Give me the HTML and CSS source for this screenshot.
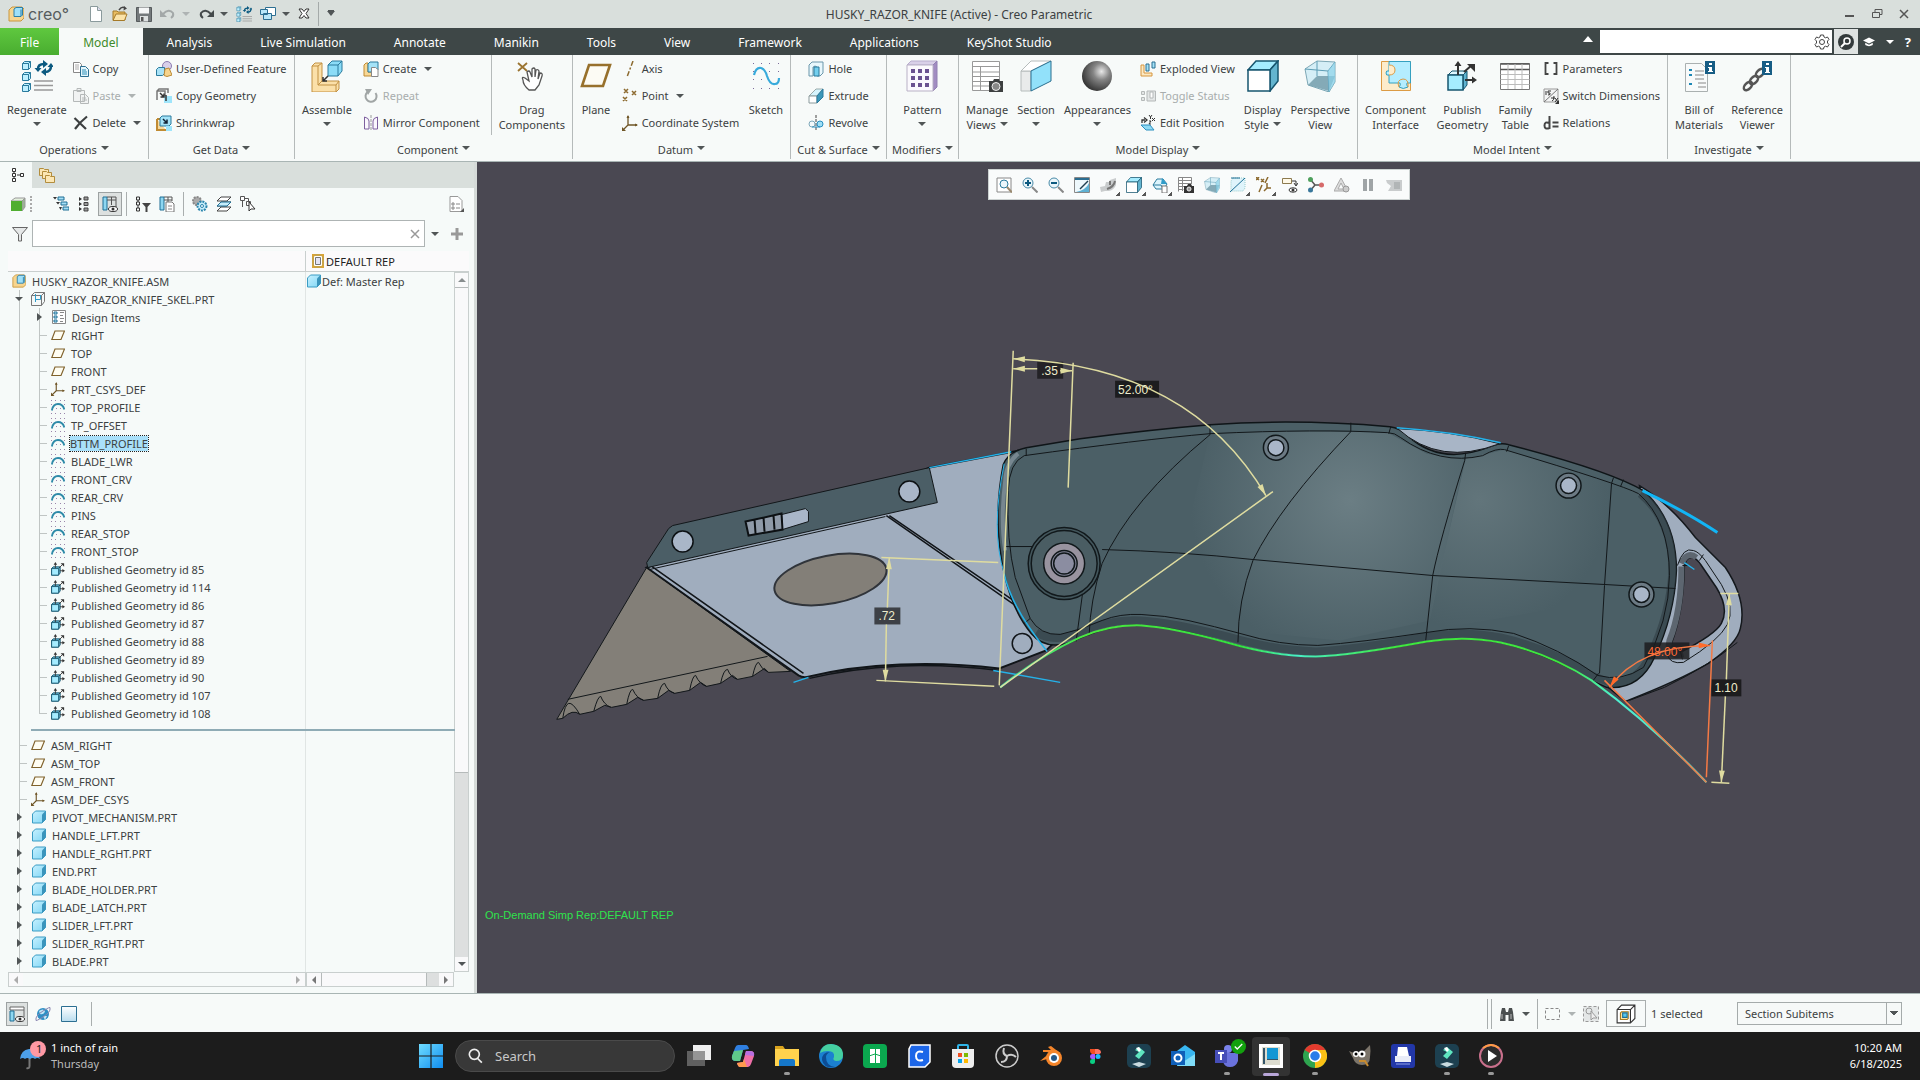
FILE: index.html
```html
<!DOCTYPE html>
<html lang="en">
<head>
    <meta charset="UTF-8">
    <meta name="viewport" content="width=device-width, initial-scale=1.0">
    <link rel="stylesheet" href="styles.css">
    <title>HUSKY_RAZOR_KNIFE (Active) - Creo Parametric</title>
</head>
<body>
    <!-- icon set -->
    <svg class="defs" width="0" height="0" aria-hidden="true">
        <defs>
            <linearGradient id="gCyan" x1="0" y1="0" x2="1" y2="1"><stop offset="0" stop-color="#c8f1ff"/><stop offset="1" stop-color="#7fd6f5"/></linearGradient>
            <radialGradient id="gBall" cx=".65" cy=".35" r=".7"><stop offset="0" stop-color="#e8e8e8"/><stop offset=".4" stop-color="#858585"/><stop offset="1" stop-color="#333"/></radialGradient>
            <linearGradient id="gWin" x1="0" y1="0" x2="1" y2="1"><stop offset="0" stop-color="#6fdcff"/><stop offset="1" stop-color="#0f8df0"/></linearGradient>
            <linearGradient id="gFade" x1="0" y1="0" x2="0" y2="1"><stop offset="0" stop-color="#fff"/><stop offset="1" stop-color="#b9dcee"/></linearGradient>
        </defs>
        <symbol id="logo" viewBox="0 0 16 16"><path d="M1 4l3-3h10l2 2v9l-3 3H1z" fill="#f7d58f" stroke="#c9973e"/><path d="M6 3l2-1.500h6.500V9L13 10.500H6z" fill="#9fe0f8" stroke="#2c7fa8"/><path d="M13 3.500V10" stroke="#2c7fa8"/></symbol>
        <symbol id="new" viewBox="0 0 16 16"><path d="M2.500.5h7l4 4v11h-11z" fill="#fff" stroke="#8a9a9c"/><path d="M9.500.5v4h4" fill="#dde" stroke="#8a9a9c"/></symbol>
        <symbol id="open" viewBox="0 0 16 16"><path d="M1 14V5h4l1 1h7v8z" fill="#e9bd62" stroke="#a57a28"/><path d="M1 14.500L4 8h11l-2.500 6.500z" fill="#fbe3a8" stroke="#a57a28"/><path d="M7 4q3-4 6-2" fill="none" stroke="#444" stroke-width="1.500"/><path d="M12 0l3 2.500-3.500 2z" fill="#444"/></symbol>
        <symbol id="save" viewBox="0 0 16 16"><path d="M.5 1.500h15v14h-15z" fill="#74797b" stroke="#565b5d"/><path d="M3 1.500h10v6H3z" fill="#f4f6f6"/><path d="M4 10h8v5.500H4z" fill="#dde1e1"/><path d="M5 11h2.500v4H5z" fill="#555"/></symbol>
        <symbol id="undo" viewBox="0 0 16 16"><path d="M3 8q6-6 10-1 1 3-2 5" fill="none" stroke="#a3a8a8" stroke-width="2"/><path d="M0 4v7h7z" fill="#a3a8a8"/></symbol>
        <symbol id="redo" viewBox="0 0 16 16"><path d="M13 8Q7 2 3 7q-1 3 2 5" fill="none" stroke="#454a4b" stroke-width="2"/><path d="M16 4v7H9z" fill="#454a4b"/></symbol>
        <symbol id="regen" viewBox="0 0 32 32"><g fill="#bff0ff" stroke="#2a7b9d"><path d="M1.500 3.500l2-2h6v6l-2 2h-6zM1.500 14.500l2-2h6v6l-2 2h-6zM1.500 25.500l2-2h6v6l-2 2h-6z"/><path d="M1.500 3.500h6v6M7.500 3.500l2-2M1.500 14.500h6v6M7.500 14.500l2-2M1.500 25.500h6v6M7.500 25.500l2-2" fill="none"/></g><path d="M17 9q0-5 6-5M30 6q0 6-6 6" fill="none" stroke="#0c5a80" stroke-width="2.500"/><path d="M22 0l5 4-5 4zM25 8v8l-5-4zM26.500 7l3.500-4 3 4zM13.500 8L17 12l3.500-4z" fill="#0c5a80"/><path d="M13 21h19M13 25.500h19M13 30h19" stroke="#999" stroke-width="1.500"/></symbol>
        <symbol id="wins" viewBox="0 0 16 16"><path d="M5.500 1.500h10v8h-10z" fill="#fff" stroke="#2c6f92"/><path d="M.5 3.500h7v5h-7zM3.500 7.500h8v6h-8z" fill="#b9e8fa" stroke="#2c6f92"/></symbol>
        <symbol id="xbox" viewBox="0 0 12 12"><path d="M1 1h3l2 2.500L8 1h3L8 5.500 11 10H8L6 7.500 4 10H1l3-4.500z" fill="#fff" stroke="#333"/></symbol>
        <symbol id="copy" viewBox="0 0 16 16"><path d="M.5 1.500h6l2 2v8h-8z" fill="#fff" stroke="#888"/><path d="M2 4h4M2 6h4M2 8h4" stroke="#aaa"/><path d="M7.500 5.500h5l3 3v7h-8z" fill="#e5f6fc" stroke="#2c6f92"/><path d="M9 9h4M9 11h5M9 13h5" stroke="#2c8fb8"/></symbol>
        <symbol id="paste" viewBox="0 0 16 16"><g fill="#f1f3f3" stroke="#b4b8b8"><path d="M.5 2.500h11v11H.500zM4 .5h4v3H4zM7.500 6.500h5l3 3v6h-8z"/><path d="M9 10h4M9 12h5"/></g></symbol>
        <symbol id="delete" viewBox="0 0 16 16"><path d="M1.500 3L13 14M14 1.500Q7 7 2 14" fill="none" stroke="#3c3f40" stroke-width="2.200"/></symbol>
        <symbol id="udf" viewBox="0 0 16 16"><circle cx="11" cy="5" r="4.500" fill="#d8d0ea" stroke="#8b7bb0"/><path d="M.5 8.500l2-2h6v6l-2 2h-6z" fill="#a8e2f7" stroke="#2a7b9d"/><path d="M9 8l4-1 3 7-5 1.500-3-1z" fill="#f6d48d" stroke="#bb8a34"/></symbol>
        <symbol id="copygeom" viewBox="0 0 16 16"><path d="M1 12V3l2-2h9v4M1 3h8v5" fill="none" stroke="#777" stroke-width="1.500"/><path d="M8 8h8v7H8z" fill="#9fe5fb"/><path d="M4 5l4 4M8 5.500V9H4.500M10 7v6" stroke="#333" fill="none" stroke-width="1.500"/></symbol>
        <symbol id="shrink" viewBox="0 0 16 16"><path d="M1 4v11h9M1 4h3" fill="#f6d99c" stroke="#c08b33" stroke-width="2"/><path d="M4 3l2-2h9v8l-2 2H4z" fill="#a4e3f8" stroke="#2a7b9d"/><path d="M7 4l4 4M11 4.500V8H7.500" stroke="#123" fill="none" stroke-width="1.500"/><path d="M10 11h6v5h-6z" fill="#9fe5fb"/></symbol>
        <symbol id="assemble" viewBox="0 0 32 32"><path d="M1 6l3-3h7v18h17v8l-3 3H1z" fill="#fbe0a9" stroke="#c29142"/><path d="M1 6h6v19h18v7M7 6l4-3M7 25l4-4M25 25l3-4" fill="none" stroke="#c29142"/><path d="M17 5l4-4h10v10l-4 5H17z" fill="#8bdcf7" stroke="#2a7b9d"/><path d="M17 5h10v11M27 5l4-4" fill="none" stroke="#2a7b9d"/><path d="M17 16l-5 5M12 17v4h4" fill="none" stroke="#333" stroke-width="1.500"/></symbol>
        <symbol id="create" viewBox="0 0 16 16"><path d="M1 4l2-2h2v9h7v2l-2 2H1z" fill="#f8d896" stroke="#c08b33"/><path d="M5 3l2-2h8v8l-2 2H5z" fill="#a4e3f8" stroke="#2a7b9d"/><path d="M8.500 6.500h4l2.500 2v7H8.500z" fill="#fff" stroke="#888"/></symbol>
        <symbol id="repeat" viewBox="0 0 16 16"><path d="M4.500 4a5.500 5.500 0 1 0 8 1" fill="none" stroke="#a0a5a5" stroke-width="2"/><path d="M2 1h7L5 7z" fill="#a0a5a5"/></symbol>
        <symbol id="mirror" viewBox="0 0 16 16"><path d="M1.500 14V2Q6 3 6 6v8zM14.500 14V2Q10 3 10 6v8z" fill="#faf7fd" stroke="#7d5f9e"/><path d="M8 0v16" stroke="#999" stroke-dasharray="3 1"/></symbol>
        <symbol id="drag" viewBox="0 0 32 32"><path d="M2 3l9 8M11 3l-9 8" stroke="#9b7431" stroke-width="1.800"/><path d="M7 20q-2-4 2-2l4 3-2-9q2-2 3 0l2 5V9q2-2 3 0v8l1-7q2-1 3 1l-1 8 2-6q3 0 2 3l-3 9-4 5h-6q-6-5-6-10z" fill="#fff" stroke="#555" stroke-width="1.300"/></symbol>
        <symbol id="plane" viewBox="0 0 32 32"><path d="M9 5h21l-7 21H2z" fill="#fcfbf4" stroke="#97702c" stroke-width="2.600"/></symbol>
        <symbol id="axis" viewBox="0 0 16 16"><path d="M11 0L5 16" stroke="#8c6a2f" stroke-width="1.500" stroke-dasharray="5 2 2 2"/></symbol>
        <symbol id="point" viewBox="0 0 16 16"><path d="M2 1l4 4M6 1L2 5M10 3l4 4M14 3l-4 4M1 9l4 4M5 9l-4 4" stroke="#8c6a2f" stroke-width="1.500"/></symbol>
        <symbol id="csys" viewBox="0 0 16 16"><path d="M6 1v9h9M6 10l-5 5" fill="none" stroke="#6f5526" stroke-width="1.300"/><path d="M4.500 3L6 0l1.500 3zM13 8.500l3 1.500-3 1.500zM0 12v4h4z" fill="#6f5526"/></symbol>
        <symbol id="sketch" viewBox="0 0 32 32"><g fill="#7c6a9a"><path d="M3 3h1v1H3zM11 3h1v1h-1zM19 3h1v1h-1zM28 3h1v1h-1zM3 11h1v1H3zM19 11h1v1h-1zM28 11h1v1h-1zM3 19h1v1H3zM11 19h1v1h-1zM28 19h1v1h-1zM3 28h1v1H3zM11 28h1v1h-1zM19 28h1v1h-1zM28 28h1v1h-1z"/></g><path d="M4 15Q6 7 11 8q4 1 6 8 3 9 8 8 4 0 4-6" fill="none" stroke="#38aadb" stroke-width="2.200"/></symbol>
        <symbol id="hole" viewBox="0 0 16 16"><path d="M1 4l3-3h11v11l-3 3H9V6q-2-2-4 0v9H1z" fill="#e8f7fc" stroke="#6a97ab"/><path d="M6 6h5v9H6z" fill="#73cfee" stroke="#2a7b9d"/></symbol>
        <symbol id="extrude" viewBox="0 0 16 16"><path d="M1 8l7-7h7l-6 7z" fill="#d6f4fd" stroke="#9aa"/><path d="M1 8h8v7H1z" fill="#fff" stroke="#8a9a9c"/><path d="M9 8l6-7v8l-6 6z" fill="#3c98b9" stroke="#2a7b9d"/></symbol>
        <symbol id="revolve" viewBox="0 0 16 16"><path d="M8 0v16" stroke="#444" stroke-dasharray="3 1"/><circle cx="4" cy="9" r="3" fill="#f4f9fb" stroke="#7ea8ba"/><circle cx="12" cy="9" r="3" fill="#9fdff6" stroke="#2a8fc0"/><path d="M4 12h8" stroke="#2a8fc0"/></symbol>
        <symbol id="pattern" viewBox="0 0 32 32"><path d="M1 5l4-4h26l-4 4z" fill="#d9d0e8" stroke="#b9aece"/><path d="M27 5l4-4v26l-4 4z" fill="#a28cc2" stroke="#9280b3"/><path d="M1 5h26v26H1z" fill="#fbf9fd" stroke="#b9b1c6"/><g fill="#6b5290"><path d="M5 9h4v4H5zM12 9h4v4h-4zM19 9h4v4h-4zM5 16h4v4H5zM12 16h4v4h-4zM19 16h4v4h-4zM5 23h4v4H5zM12 23h4v4h-4zM19 23h4v4h-4z"/></g></symbol>
        <symbol id="views" viewBox="0 0 32 32"><path d="M1.500 1.500h27v29h-27z" fill="#fff"/><path d="M1.500 30.500V1.500h27V20M1.500 6.500h27M1.500 12h27M1.500 16.500h27M1.500 21.500h17M1.500 26h17M1.500 30.500h17M9.500 6v24" fill="none" stroke="#999"/><path d="M18 21h4l1-2h5l1 2h3v11H18z" fill="#3d3f40"/><circle cx="25" cy="26.500" r="4" fill="#888" stroke="#eee"/></symbol>
        <symbol id="tviews" viewBox="0 0 16 16"><path d="M.5.5h13v14H.5z" fill="#fff"/><path d="M.5 14.500V.5h13V7M.5 3.500h13M.5 6.500h13M.5 9.500h6M.5 12.500h5M4.500 1v13" fill="none" stroke="#888"/><path d="M6 9h3l1-2h3l1 2h2v7H6z" fill="#333"/><circle cx="11" cy="12" r="2" fill="#999" stroke="#eee"/></symbol>
        <symbol id="section" viewBox="0 0 32 32"><path d="M1 11h10v20H1z" fill="#e9ebeb" stroke="#b6bcbc"/><path d="M1 11l10-10h20L11 11z" fill="#fff" stroke="#b6bcbc"/><path d="M11 11L31 1v20L11 31z" fill="#92e1fa" stroke="#2a6f90"/></symbol>
        <symbol id="ball" viewBox="0 0 32 32"><circle cx="16" cy="16" r="15" fill="url(#gBall)"/></symbol>
        <symbol id="exploded" viewBox="0 0 16 16"><path d="M1 4h3v8h8v3H1z" fill="#fbe9c4" stroke="#d7963e"/><path d="M6 3h3v7H6zM12 1h3v6h-3z" fill="#a4e3f8" stroke="#2a6f90"/></symbol>
        <symbol id="toggle" viewBox="0 0 16 16"><path d="M1.500 3.500h3v3h-3zM1.500 9.500h3v3h-3zM7 3h8.500v10H7z" fill="#e3e6e6" stroke="#b4b8b8"/><path d="M10 4h3v6h-3z" fill="#fff" stroke="#b4b8b8"/></symbol>
        <symbol id="editpos" viewBox="0 0 16 16"><path d="M2 8V5h3M4 2.500L7 5 4 7.500" fill="none" stroke="#333" stroke-width="1.300"/><path d="M9 0l1.500 2L12 0M10.500 2v2M12 3l3 3M15 3l-3 3M9 6h2L9 9h2" fill="none" stroke="#333"/><path d="M1 10h9l4 5H6z" fill="#8fdaf4" stroke="#2a8fc0"/></symbol>
        <symbol id="cube" viewBox="0 0 32 32"><path d="M1 10l8-9h22l-8 9z" fill="#a5ecff" stroke="#17566f" stroke-width="1.500"/><path d="M23 10l8-9v20l-8 10z" fill="#63b4cf" stroke="#17566f" stroke-width="1.500"/><path d="M1 10h22v21H1z" fill="#fff" stroke="#17566f" stroke-width="1.500"/></symbol>
        <symbol id="persp" viewBox="0 0 32 32"><path d="M1 9L13 1l18 1v20l-6 10L4 25z" fill="#d5eef6" stroke="#7da7b5"/><path d="M4 25l9-9h18l-6 15z" fill="#6f98a8" opacity=".8"/><path d="M1 9l23 2 7-9M24 11l1 21M13 1v15" fill="none" stroke="#5c9cb4"/><path d="M24 11l7-9v20l-6 10z" fill="#8cd3ea" opacity=".7"/></symbol>
        <symbol id="puzzle" viewBox="0 0 32 32"><path d="M1.500 1.500h29v29h-29z" fill="#fdeccb" stroke="#dc9b44"/><path d="M9 1.500h21.500V23H27q-1 2 1 4-5 3-9 0 2-2 1-4H9v-8q-3 1-3-2t3-2z" fill="#b4edff" stroke="#35a0c0"/><path d="M9 5q6 0 6 5t-6 5" fill="#fdeccb" stroke="#dc9b44"/><path d="M19 27q-3-7 4-8 6 0 5 8" fill="none" stroke="#dc9b44"/></symbol>
        <symbol id="publish" viewBox="0 0 32 32"><path d="M2 15l4-4h15l-4 4z" fill="#dff7ff" stroke="#17566f"/><path d="M17 15l4-4v14l-4 5z" fill="#5fb3d0" stroke="#17566f"/><path d="M2 15h15v15H2z" fill="#a5ecff" stroke="#17566f" stroke-width="1.500"/><path d="M12 15V5M18 12l8-7M19 20h8" stroke="#333" stroke-width="2"/><path d="M8.500 6L12 1l3.500 5zM21 4h8v8zM26 16.500l5 3.500-5 3.500z" fill="#333"/></symbol>
        <symbol id="tpublish" viewBox="0 0 16 16"><path d="M.5 7.500l2-2h8v7l-2 2.500h-8z" fill="#5fb3d0" stroke="#17566f"/><path d="M.7 7.500h8v7.500h-8z" fill="#a5ecff" stroke="#17566f"/><path d="M5 7V2M9 7l4-4M10 10h4" stroke="#333"/><path d="M3 3l2-3 2 3zM11 1.500h4v4zM13 8l3 2-3 2z" fill="#333"/></symbol>
        <symbol id="ftable" viewBox="0 0 32 32"><path d="M1.500 3.500h29v26h-29z" fill="#fff" stroke="#777"/><path d="M1.500 4h29M1.500 9.500h29" stroke="#555" stroke-width="1.500"/><path d="M1.500 14.500h29M1.500 19.500h29M1.500 24.500h29M9 4v25M16 4v25M23 4v25" stroke="#bbb"/></symbol>
        <symbol id="params" viewBox="0 0 16 16"><path d="M5.500 2H2.500v11h3M10.500 2h3v11h-3" fill="none" stroke="#444" stroke-width="1.800"/></symbol>
        <symbol id="switch" viewBox="0 0 16 16"><path d="M1 1h14v13H1z" fill="#f3f4f4" stroke="#999"/><path d="M1 14L15 1" stroke="#777"/><path d="M3 3v4M5 3h3M5 3v2h2q1 2-2 2M9 13q2 0 2-5M8 10h4M12 10l3 4M15 10l-3 4" fill="none" stroke="#333"/><path d="M12 16h4v-4z" fill="#333"/></symbol>
        <symbol id="relations" viewBox="0 0 16 16"><path d="M6.500 1v13M6.500 8q-5-2-5 2.500t5 2.500M9.500 7.500h6M9.500 11.500h6" fill="none" stroke="#444" stroke-width="2"/></symbol>
        <symbol id="bom" viewBox="0 0 32 32"><path d="M2.500 3.500h16l6 6v22h-22z" fill="#f8fafa" stroke="#aab0b0"/><path d="M12 11h9M12 15h9M12 19h9M15 23h8M15 27h8" stroke="#888"/><path d="M6 10h3M6 15h3M6 24h3" stroke="#1d87b5" stroke-width="2"/><path d="M22 1h10v13H22z" fill="#175d85"/><path d="M26 3h3v2h-3zM25 7h4v4h1v1h-5v-1h1V8h-1z" fill="#fff"/></symbol>
        <symbol id="refview" viewBox="0 0 32 32"><g fill="none" stroke="#555" stroke-width="2.500"><ellipse cx="7" cy="26" rx="5" ry="3" transform="rotate(-45 7 26)"/><ellipse cx="13" cy="20" rx="5" ry="3" transform="rotate(-45 13 20)"/><ellipse cx="19" cy="13" rx="5" ry="3" transform="rotate(-45 19 13)"/></g><path d="M21 1h10v14H21z" fill="#175d85"/><path d="M25 3h3v2h-3zM24 7h4v5h1v1h-5v-1h1V8h-1z" fill="#fff"/></symbol>
        <symbol id="gear" viewBox="0 0 16 16"><path d="M6.500 1h3l.5 2 1.500.8 2-.8L15 5.500 13.500 7v2l1.500 1.500-1.500 2.500-2-.8L10 13l-.5 2h-3L6 13l-1.500-.8-2 .8L1 10.500 2.500 9V7L1 5.500 2.500 3l2 .8L6 3z" fill="none" stroke="#444"/><circle cx="8" cy="8" r="2.500" fill="none" stroke="#444"/></symbol>
        <symbol id="find" viewBox="0 0 16 16"><circle cx="8" cy="8" r="8" fill="#333a3b"/><circle cx="9" cy="7" r="3" fill="none" stroke="#fff" stroke-width="1.500"/><path d="M7 9l-4 4" stroke="#fff" stroke-width="2"/></symbol>
        <symbol id="hat" viewBox="0 0 16 16"><path d="M0 6l8-4 8 4-8 4zM3 9v3q5 3 10 0V9l-5 2.500z" fill="#fff"/></symbol>

        <!-- navigator -->
        <symbol id="tabtree" viewBox="0 0 16 16"><path d="M3 5v6M6 8h4" stroke="#333"/><path d="M1.500 1.500h3v3h-3zM1.500 6.500h3v3h-3zM1.500 11.500h3v3h-3zM9.500 6.500h3v3h-3z" fill="#fff" stroke="#333"/></symbol>
        <symbol id="folders" viewBox="0 0 16 16"><g fill="#fce7b4" stroke="#b28d3d"><path d="M.5 1.500h4l1 1h4v6h-9z"/><path d="M3.500 4.500h4l1 1h4v6h-9z"/><path d="M6.500 8.500h4l1 1h4v6h-9z"/></g></symbol>
        <symbol id="greencube" viewBox="0 0 16 16"><path d="M1 5l4-3h10l-3 3z" fill="#e4f1de" stroke="#999"/><path d="M12 5l3-3v9l-3 4z" fill="#9cb395" stroke="#999"/><path d="M1 5h11v10H1z" fill="#4fae30"/></symbol>
        <symbol id="treeexp" viewBox="0 0 16 16"><path d="M5 1h6v3H5zM8 6h6v3H8zM10 11h6v3h-6z" fill="#a5dff5" stroke="#1f6f95"/><path d="M0 1h4L2 3.500zM3 6h4L5 8.500zM6 11h3l-1.500 3z" fill="#333"/></symbol>
        <symbol id="treecol" viewBox="0 0 16 16"><path d="M7 1h4v3H7zM7 6.500h4v3H7zM7 12h4v3H7z" fill="#999" stroke="#444"/><path d="M2 1l3 2-3 2zM2 6l3 2-3 2zM2 11l3 2-3 2z" fill="#333"/></symbol>
        <symbol id="cols" viewBox="0 0 16 16"><path d="M1 1h4v13H1z" fill="#8ed7f1" stroke="#1f6f95"/><path d="M5 1h9v13M5 4h9M9.500 1v8" fill="none" stroke="#555"/><ellipse cx="11" cy="13" rx="4.500" ry="2.500" fill="#fff" stroke="#333"/><circle cx="11" cy="13" r="1.500" fill="#333"/></symbol>
        <symbol id="panel" viewBox="0 0 16 16"><path d="M1 1h14v3H1z" fill="#fff" stroke="#666"/><path d="M15 4v7M5 14.500H1" fill="none" stroke="#666"/><path d="M1 5h4v10H1z" fill="#8ed7f1" stroke="#1f6f95"/><ellipse cx="11" cy="13" rx="4.500" ry="2.500" fill="#fff" stroke="#333"/><circle cx="11" cy="13" r="1.500" fill="#333"/></symbol>
        <symbol id="treefilt" viewBox="0 0 16 16"><path d="M1.500 1h3v3h-3zM1.500 6h3v3h-3zM1.500 12h3v3h-3zM3 4v2M3 9v3" fill="none" stroke="#333"/><path d="M7 7h9l-3.500 4v5h-2v-5z" fill="#444"/></symbol>
        <symbol id="colset" viewBox="0 0 16 16"><path d="M1 1h4v13H1z" fill="#8ed7f1" stroke="#1f6f95"/><path d="M5 1h8M5 4h8M9 1v5M13 1v4" stroke="#555"/><path d="M7 6h6l2 2v8H7z" fill="#fff" stroke="#777"/><path d="M9 10h4M9 13h4" stroke="#888"/></symbol>
        <symbol id="gears" viewBox="0 0 16 16"><circle cx="5" cy="5" r="4" fill="#aaa" stroke="#888" stroke-dasharray="2 1" stroke-width="2"/><circle cx="10" cy="10" r="4.500" fill="#c5edfb" stroke="#2a85ad" stroke-dasharray="2 1" stroke-width="2"/><circle cx="10" cy="10" r="1.500" fill="#fff" stroke="#2a85ad"/></symbol>
        <symbol id="layers" viewBox="0 0 16 16"><path d="M5 1h10l-4 4H1zM5 6h10l-4 4H1zM5 11h10l-4 4H1z" fill="#fff" stroke="#444"/><path d="M5 6h10l-4 4H1z" fill="#c5edfb" stroke="#1f6f95"/></symbol>
        <symbol id="picktree" viewBox="0 0 16 16"><path d="M.5.5h4v4h-4zM6.500 5.500h4v4h-4zM2.500 5v6M4 2.500h4.500v3" fill="#fff" stroke="#555"/><path d="M9 6v9l2-2h4z" fill="#fff" stroke="#333"/></symbol>
        <symbol id="report" viewBox="0 0 16 16"><path d="M2 .5h8l4 4v11H2z" fill="#fff" stroke="#999"/><path d="M4 7h2v2H4zM4 11h2v2H4zM8 8h4M8 12h4" fill="none" stroke="#888"/><path d="M16 12v4h-4z" fill="#555"/></symbol>
        <symbol id="funnel" viewBox="0 0 16 16"><path d="M.5 1.500h15l-6 7v6.500h-3V8.500z" fill="#e5e8e8" stroke="#666"/></symbol>
        <symbol id="rep" viewBox="0 0 12 14"><path d="M1 1h10v12H1z" fill="#fff" stroke="#b8860b" stroke-width="1.500"/><path d="M3.500 3.500h5v7h-5z" fill="#e4e4f4" stroke="#777"/><path d="M0 0h2.500v2.500H0zM9.500 0H12v2.500H9.500zM0 11.500h2.500V14H0zM9.500 11.500H12V14H9.500z" fill="#d9a436"/></symbol>
        <symbol id="skel" viewBox="0 0 14 14"><path d="M.5 3.500l3-3h10v9l-3 4H.5z" fill="#f4f8f8" stroke="#777"/><path d="M.5 3.500h10v10M10.500 3.500l3-3" fill="none" stroke="#777"/><path d="M4.500 2v8M4.500 7.500h5V3" fill="none" stroke="#2f9cc9"/></symbol>
        <symbol id="ditems" viewBox="0 0 14 14"><path d="M.5.5h13v13H.5z" fill="#fff" stroke="#888"/><path d="M2 2h3v2H2zM2 6h3v2H2zM2 10h3v2H2z" fill="#c8f0fc" stroke="#1f6f95"/><path d="M8 2.500h4M8 5.500h3M8 8.500h4M8 11.500h3" stroke="#888"/></symbol>
        <symbol id="tplane" viewBox="0 0 14 14"><path d="M4 3h9.500L10 11.500H.8z" fill="#fffdf2" stroke="#80622c" stroke-width="1.200"/></symbol>
        <symbol id="tcurve" viewBox="0 0 14 14"><g fill="#9a86ab"><path d="M0 0h1v1H0zM4 0h1v1H4zM9 0h1v1H9zM13 0h1v1h-1zM0 4h1v1H0zM13 4h1v1h-1zM5 8h1v1H5zM9 8h1v1H9zM0 13h1v1H0zM4 13h1v1H4zM9 13h1v1H9zM13 13h1v1h-1z"/></g><path d="M.8 10.500Q2 4 7 4t6.300 5.500" fill="none" stroke="#2e8aa8" stroke-width="1.800"/></symbol>
        <symbol id="tpart" viewBox="0 0 14 14"><path d="M.5 4l3-3h10v8.500L10 13H.5z" fill="url(#gCyan)" stroke="#3a9cc4"/><path d="M10 4.500L13.500 1v8.500L10 13z" fill="#3a94bb"/></symbol>

        <!-- graphics toolbar -->
        <symbol id="zfit" viewBox="0 0 16 16"><path d="M1 1h14v14H1z" fill="#fff" stroke="#888"/><circle cx="8" cy="7" r="4" fill="#eaf6fb" stroke="#2a7b9d"/><path d="M11 10l5 5.500" stroke="#9a8a70" stroke-width="2"/></symbol>
        <symbol id="zin" viewBox="0 0 16 16"><circle cx="6" cy="6" r="5" fill="#eaf6fb" stroke="#4a8ba8"/><path d="M10 10l5.500 5.500" stroke="#888" stroke-width="2"/><path d="M3 6h6M6 3v6" stroke="#0c5a80" stroke-width="2"/></symbol>
        <symbol id="zout" viewBox="0 0 16 16"><circle cx="6" cy="6" r="5" fill="#eaf6fb" stroke="#4a8ba8"/><path d="M10 10l5.500 5.500" stroke="#888" stroke-width="2"/><path d="M3 6h6" stroke="#0c5a80" stroke-width="2"/></symbol>
        <symbol id="repaint" viewBox="0 0 16 16"><path d="M.5.5h15v15H.5z" fill="#eef8fc" stroke="#888"/><path d="M1 1h14v2H1z" fill="#2b6d90"/><path d="M15 6v9H2Q12 13 15 6z" fill="#5fb1d3"/><path d="M14 4L6 12" stroke="#1f3f50" stroke-width="1.500"/></symbol>
        <symbol id="render" viewBox="0 0 16 16"><path d="M10 3l6-2v7q-2 5-7 6H5L1 15l-1-5 5-1 1-4h3z" fill="#c9cccd"/><path d="M15 4q-1 6-8 8M10 4v4" fill="none" stroke="#777" stroke-width="2"/></symbol>
        <symbol id="orient" viewBox="0 0 16 16"><path d="M1 8l4-6h6l4 5-3 5H4z" fill="#dcf4fc" stroke="#2a7b9d"/><path d="M10 1l5 6H9z" fill="#2f9cc9"/><path d="M1 8h8l2 4" fill="none" stroke="#2a7b9d"/><path d="M10 9h5v7h-5z" fill="#fff" stroke="#777"/></symbol>
        <symbol id="clip" viewBox="0 0 16 16"><path d="M3 1h12v10l-2 3H1V4z" fill="#dff4fb" stroke="#9cc" stroke-dasharray="1 1"/><path d="M0 15L15 1M1 1h9" stroke="#1f6f95"/></symbol>
        <symbol id="datum" viewBox="0 0 16 16"><path d="M0 0l3 3M3 0L0 3M5 2l3 3M8 2L5 5M12 0l-3 6M6 8L3 15M11 6v5h4M11 11l-3 3" fill="none" stroke="#8c6a2f" stroke-width="1.500"/></symbol>
        <symbol id="annot" viewBox="0 0 16 16"><path d="M.5 1.500h9v5h-9z" fill="#fff9e8" stroke="#8c7a4f"/><path d="M10 4h4v4M12 6l2 3 2-3" fill="none" stroke="#333"/><ellipse cx="11" cy="13" rx="4" ry="2.200" fill="#fff" stroke="#333"/><circle cx="11" cy="13" r="1.500" fill="#333"/></symbol>
        <symbol id="spin" viewBox="0 0 16 16"><path d="M2 2l5 6h7M7 8l-5 6" fill="none" stroke="#555" stroke-width="1.500"/><circle cx="2.500" cy="2.500" r="2.500" fill="#4ea05c"/><circle cx="13.500" cy="8" r="2.500" fill="#d66a6a"/><circle cx="2.500" cy="13" r="2.500" fill="#39779b"/></symbol>
        <symbol id="sim" viewBox="0 0 16 16"><path d="M7 1l7 13H0zM7 6l-3 6h6z" fill="#ddd" stroke="#aaa"/><circle cx="12" cy="12" r="3" fill="#ccc" stroke="#999"/></symbol>
        <symbol id="pause" viewBox="0 0 16 16"><path d="M3 2h4v12H3zM9 2h4v12H9z" fill="#9fa4a6"/></symbol>
        <symbol id="flag" viewBox="0 0 16 16"><path d="M0 3h16v11H2l3-5-4-3z" fill="#c9cccd"/><path d="M8 5h6v7H8z" fill="#b1b5b6"/></symbol>
    </svg>

    <header class="titlebar">
        <div class="quick">
            <svg class="i16"><use href="#logo"/></svg>
            <span class="brand">creo&deg;</span>
            <button aria-label="New"><svg class="i16"><use href="#new"/></svg></button>
            <button aria-label="Open"><svg class="i16"><use href="#open"/></svg></button>
            <button aria-label="Save"><svg class="i16"><use href="#save"/></svg></button>
            <button aria-label="Undo"><svg class="i16"><use href="#undo"/></svg><i class="caret off"></i></button>
            <button aria-label="Redo"><svg class="i16"><use href="#redo"/></svg><i class="caret"></i></button>
            <button aria-label="Regenerate"><svg class="i16"><use href="#regen"/></svg></button>
            <button aria-label="Windows"><svg class="i16"><use href="#wins"/></svg><i class="caret"></i></button>
            <button aria-label="Close window"><svg class="i12"><use href="#xbox"/></svg></button>
            <button class="more" aria-label="Customize"><i class="caret bar"></i></button>
        </div>
        <h1>HUSKY_RAZOR_KNIFE (Active) - Creo Parametric</h1>
        <div class="winbtns">
            <button aria-label="Minimize"><svg width="12" height="12"><path d="M1 8h9" stroke="#555" stroke-width="2"/></svg></button>
            <button aria-label="Restore"><svg width="12" height="12"><path d="M1.500 4.500h7v5h-7zM4 4V1.500h7v5H9" fill="none" stroke="#555"/></svg></button>
            <button aria-label="Close"><svg width="12" height="12"><path d="M2 2l8 8M10 2l-8 8" stroke="#555" stroke-width="1.500"/></svg></button>
        </div>
    </header>

    <nav class="tabs">
        <button class="tab file">File</button>
        <button class="tab selected">Model</button>
        <button class="tab">Analysis</button>
        <button class="tab">Live Simulation</button>
        <button class="tab">Annotate</button>
        <button class="tab">Manikin</button>
        <button class="tab">Tools</button>
        <button class="tab">View</button>
        <button class="tab">Framework</button>
        <button class="tab">Applications</button>
        <button class="tab">KeyShot Studio</button>
        <div class="tab-tools">
            <button class="fold" aria-label="Minimize the ribbon"><i class="caret up"></i></button>
            <div class="cmd-search">
                <input type="text" aria-label="Command search">
                <button aria-label="Search settings"><svg class="i16"><use href="#gear"/></svg></button>
            </div>
            <button class="find" aria-label="Search"><svg class="i16"><use href="#find"/></svg></button>
            <button aria-label="Learning Connector"><svg class="i12"><use href="#hat"/></svg></button>
            <button aria-label="Help menu"><i class="caret white"></i></button>
            <button class="help" aria-label="Help">?</button>
        </div>
    </nav>

    <section class="ribbon">
        <div class="group operations">
            <div class="cmds">
                <button class="big"><svg><use href="#regen"/></svg><span>Regenerate</span><i class="caret"></i></button>
                <div class="stack">
                    <button><svg class="i16"><use href="#copy"/></svg>Copy</button>
                    <button disabled><svg class="i16"><use href="#paste"/></svg>Paste<i class="caret"></i></button>
                    <button><svg class="i16"><use href="#delete"/></svg>Delete<i class="caret"></i></button>
                </div>
            </div>
            <button class="group-name">Operations<i class="caret"></i></button>
        </div>
        <div class="group get-data">
            <div class="cmds">
                <div class="stack">
                    <button><svg class="i16"><use href="#udf"/></svg>User-Defined Feature</button>
                    <button><svg class="i16"><use href="#copygeom"/></svg>Copy Geometry</button>
                    <button><svg class="i16"><use href="#shrink"/></svg>Shrinkwrap</button>
                </div>
            </div>
            <button class="group-name">Get Data<i class="caret"></i></button>
        </div>
        <div class="group component">
            <div class="cmds">
                <button class="big"><svg><use href="#assemble"/></svg><span>Assemble</span><i class="caret"></i></button>
                <div class="stack">
                    <button><svg class="i16"><use href="#create"/></svg>Create<i class="caret"></i></button>
                    <button disabled><svg class="i16"><use href="#repeat"/></svg>Repeat</button>
                    <button><svg class="i16"><use href="#mirror"/></svg>Mirror Component</button>
                </div>
                <button class="big divided"><svg><use href="#drag"/></svg><span>Drag<br>Components</span></button>
            </div>
            <button class="group-name">Component<i class="caret"></i></button>
        </div>
        <div class="group datum">
            <div class="cmds">
                <button class="big"><svg><use href="#plane"/></svg><span>Plane</span></button>
                <div class="stack">
                    <button><svg class="i16"><use href="#axis"/></svg>Axis</button>
                    <button><svg class="i16"><use href="#point"/></svg>Point<i class="caret"></i></button>
                    <button><svg class="i16"><use href="#csys"/></svg>Coordinate System</button>
                </div>
                <button class="big"><svg><use href="#sketch"/></svg><span>Sketch</span></button>
            </div>
            <button class="group-name">Datum<i class="caret"></i></button>
        </div>
        <div class="group cut">
            <div class="cmds">
                <div class="stack">
                    <button><svg class="i16"><use href="#hole"/></svg>Hole</button>
                    <button><svg class="i16"><use href="#extrude"/></svg>Extrude</button>
                    <button><svg class="i16"><use href="#revolve"/></svg>Revolve</button>
                </div>
            </div>
            <button class="group-name">Cut &amp; Surface<i class="caret"></i></button>
        </div>
        <div class="group modifiers">
            <div class="cmds">
                <button class="big"><svg><use href="#pattern"/></svg><span>Pattern</span><i class="caret"></i></button>
            </div>
            <button class="group-name">Modifiers<i class="caret"></i></button>
        </div>
        <div class="group display">
            <div class="cmds">
                <button class="big"><svg><use href="#views"/></svg><span>Manage<br>Views<i class="caret"></i></span></button>
                <button class="big"><svg><use href="#section"/></svg><span>Section</span><i class="caret"></i></button>
                <button class="big"><svg><use href="#ball"/></svg><span>Appearances</span><i class="caret"></i></button>
                <div class="stack">
                    <button><svg class="i16"><use href="#exploded"/></svg>Exploded View</button>
                    <button disabled><svg class="i16"><use href="#toggle"/></svg>Toggle Status</button>
                    <button><svg class="i16"><use href="#editpos"/></svg>Edit Position</button>
                </div>
                <button class="big"><svg><use href="#cube"/></svg><span>Display<br>Style<i class="caret"></i></span></button>
                <button class="big"><svg><use href="#persp"/></svg><span>Perspective<br>View</span></button>
            </div>
            <button class="group-name">Model Display<i class="caret"></i></button>
        </div>
        <div class="group intent">
            <div class="cmds">
                <button class="big"><svg><use href="#puzzle"/></svg><span>Component<br>Interface</span></button>
                <button class="big"><svg><use href="#publish"/></svg><span>Publish<br>Geometry</span></button>
                <button class="big"><svg><use href="#ftable"/></svg><span>Family<br>Table</span></button>
                <div class="stack">
                    <button><svg class="i16"><use href="#params"/></svg>Parameters</button>
                    <button><svg class="i16"><use href="#switch"/></svg>Switch Dimensions</button>
                    <button><svg class="i16"><use href="#relations"/></svg>Relations</button>
                </div>
            </div>
            <button class="group-name">Model Intent<i class="caret"></i></button>
        </div>
        <div class="group investigate">
            <div class="cmds">
                <button class="big"><svg><use href="#bom"/></svg><span>Bill of<br>Materials</span></button>
                <button class="big"><svg><use href="#refview"/></svg><span>Reference<br>Viewer</span></button>
            </div>
            <button class="group-name">Investigate<i class="caret"></i></button>
        </div>
    </section>

    <main>
        <aside class="navigator">
            <div class="nav-tabs">
                <button class="selected" aria-label="Model Tree"><svg class="i16"><use href="#tabtree"/></svg></button>
                <button aria-label="Folder Browser"><svg class="i16"><use href="#folders"/></svg></button>
            </div>
            <div class="tree-tools">
                <button aria-label="Model"><svg class="i16"><use href="#greencube"/></svg></button>
                <span class="dots"></span>
                <button aria-label="Expand"><svg class="i16"><use href="#treeexp"/></svg></button>
                <button aria-label="Collapse"><svg class="i16"><use href="#treecol"/></svg></button>
                <button class="pressed" aria-label="Show columns"><svg class="i16"><use href="#cols"/></svg></button>
                <span class="sep"></span>
                <button aria-label="Tree filters"><svg class="i16"><use href="#treefilt"/></svg></button>
                <button aria-label="Tree columns"><svg class="i16"><use href="#colset"/></svg></button>
                <span class="sep"></span>
                <button aria-label="Settings"><svg class="i16"><use href="#gears"/></svg></button>
                <button aria-label="Layers"><svg class="i16"><use href="#layers"/></svg></button>
                <button aria-label="Select in tree"><svg class="i16"><use href="#picktree"/></svg></button>
                <button class="last" aria-label="Report"><svg class="i16"><use href="#report"/></svg></button>
            </div>
            <div class="filter">
                <svg class="i16"><use href="#funnel"/></svg>
                <div class="filter-box">
                    <input type="text" aria-label="Filter tree">
                    <button aria-label="Clear"><svg width="10" height="10"><path d="M1 1l8 8M9 1L1 9" stroke="#999" stroke-width="1.500"/></svg></button>
                </div>
                <button aria-label="Filter history"><i class="caret"></i></button>
                <button aria-label="Add filter"><svg width="12" height="12"><path d="M6 0v12M0 6h12" stroke="#999" stroke-width="3"/></svg></button>
            </div>
            <div class="tree-head">
                <span></span>
                <span class="rep-head"><svg class="rep"><use href="#rep"/></svg>DEFAULT REP</span>
            </div>
            <div class="tree-body">
                <div class="names">
                    <div class="row root"><svg class="i14"><use href="#logo"/></svg>HUSKY_RAZOR_KNIFE.ASM</div>
                    <ul class="branch">
                        <li>
                            <div class="row node open"><svg class="i14"><use href="#skel"/></svg>HUSKY_RAZOR_KNIFE_SKEL.PRT</div>
                            <ul class="branch inner">
                                <li><div class="row node"><svg class="i14"><use href="#ditems"/></svg>Design Items</div></li>
                                <li><div class="row"><svg class="i14"><use href="#tplane"/></svg>RIGHT</div></li>
                                <li><div class="row"><svg class="i14"><use href="#tplane"/></svg>TOP</div></li>
                                <li><div class="row"><svg class="i14"><use href="#tplane"/></svg>FRONT</div></li>
                                <li><div class="row"><svg class="i14"><use href="#csys"/></svg>PRT_CSYS_DEF</div></li>
                                <li><div class="row"><svg class="i14"><use href="#tcurve"/></svg>TOP_PROFILE</div></li>
                                <li><div class="row"><svg class="i14"><use href="#tcurve"/></svg>TP_OFFSET</div></li>
                                <li><div class="row"><svg class="i14"><use href="#tcurve"/></svg><span class="picked">BTTM_PROFILE</span></div></li>
                                <li><div class="row"><svg class="i14"><use href="#tcurve"/></svg>BLADE_LWR</div></li>
                                <li><div class="row"><svg class="i14"><use href="#tcurve"/></svg>FRONT_CRV</div></li>
                                <li><div class="row"><svg class="i14"><use href="#tcurve"/></svg>REAR_CRV</div></li>
                                <li><div class="row"><svg class="i14"><use href="#tcurve"/></svg>PINS</div></li>
                                <li><div class="row"><svg class="i14"><use href="#tcurve"/></svg>REAR_STOP</div></li>
                                <li><div class="row"><svg class="i14"><use href="#tcurve"/></svg>FRONT_STOP</div></li>
                                <li><div class="row"><svg class="i14"><use href="#tpublish"/></svg>Published Geometry id 85</div></li>
                                <li><div class="row"><svg class="i14"><use href="#tpublish"/></svg>Published Geometry id 114</div></li>
                                <li><div class="row"><svg class="i14"><use href="#tpublish"/></svg>Published Geometry id 86</div></li>
                                <li><div class="row"><svg class="i14"><use href="#tpublish"/></svg>Published Geometry id 87</div></li>
                                <li><div class="row"><svg class="i14"><use href="#tpublish"/></svg>Published Geometry id 88</div></li>
                                <li><div class="row"><svg class="i14"><use href="#tpublish"/></svg>Published Geometry id 89</div></li>
                                <li><div class="row"><svg class="i14"><use href="#tpublish"/></svg>Published Geometry id 90</div></li>
                                <li><div class="row"><svg class="i14"><use href="#tpublish"/></svg>Published Geometry id 107</div></li>
                                <li><div class="row"><svg class="i14"><use href="#tpublish"/></svg>Published Geometry id 108</div></li>
                            </ul>
                        </li>
                        <li class="insert-here"></li>
                        <li><div class="row"><svg class="i14"><use href="#tplane"/></svg>ASM_RIGHT</div></li>
                        <li><div class="row"><svg class="i14"><use href="#tplane"/></svg>ASM_TOP</div></li>
                        <li><div class="row"><svg class="i14"><use href="#tplane"/></svg>ASM_FRONT</div></li>
                        <li><div class="row"><svg class="i14"><use href="#csys"/></svg>ASM_DEF_CSYS</div></li>
                        <li><div class="row node"><svg class="i14"><use href="#tpart"/></svg>PIVOT_MECHANISM.PRT</div></li>
                        <li><div class="row node"><svg class="i14"><use href="#tpart"/></svg>HANDLE_LFT.PRT</div></li>
                        <li><div class="row node"><svg class="i14"><use href="#tpart"/></svg>HANDLE_RGHT.PRT</div></li>
                        <li><div class="row node"><svg class="i14"><use href="#tpart"/></svg>END.PRT</div></li>
                        <li><div class="row node"><svg class="i14"><use href="#tpart"/></svg>BLADE_HOLDER.PRT</div></li>
                        <li><div class="row node"><svg class="i14"><use href="#tpart"/></svg>BLADE_LATCH.PRT</div></li>
                        <li><div class="row node"><svg class="i14"><use href="#tpart"/></svg>SLIDER_LFT.PRT</div></li>
                        <li><div class="row node"><svg class="i14"><use href="#tpart"/></svg>SLIDER_RGHT.PRT</div></li>
                        <li><div class="row node"><svg class="i14"><use href="#tpart"/></svg>BLADE.PRT</div></li>
                        <li class="below"></li>
                    </ul>
                </div>
                <div class="reps">
                    <div class="row"><svg class="i14"><use href="#tpart"/></svg>Def: Master Rep</div>
                </div>
                <div class="vscroll"><b><i class="caret up"></i></b><div class="thumb"></div><b><i class="caret"></i></b></div>
            </div>
            <div class="hscrolls">
                <div class="hscroll"><b><i class="caret left off"></i></b><div class="track"></div><b><i class="caret right off"></i></b></div>
                <div class="hscroll live"><b><i class="caret left"></i></b><div class="track"></div><b><i class="caret right"></i></b></div>
            </div>
        </aside>

        <section class="graphics">
            <div class="view-tools">
                <button aria-label="Refit"><svg class="i16"><use href="#zfit"/></svg></button>
                <button aria-label="Zoom in"><svg class="i16"><use href="#zin"/></svg></button>
                <button aria-label="Zoom out"><svg class="i16"><use href="#zout"/></svg></button>
                <button aria-label="Repaint"><svg class="i16"><use href="#repaint"/></svg></button>
                <button class="menu" aria-label="Rendering"><svg class="i16"><use href="#render"/></svg></button>
                <button class="menu" aria-label="Display style"><svg class="i16"><use href="#cube"/></svg></button>
                <button class="menu" aria-label="Saved orientations"><svg class="i16"><use href="#orient"/></svg></button>
                <button aria-label="View manager"><svg class="i16"><use href="#tviews"/></svg></button>
                <button aria-label="Perspective"><svg class="i16"><use href="#persp"/></svg></button>
                <button class="menu" aria-label="Section display"><svg class="i16"><use href="#clip"/></svg></button>
                <button class="menu" aria-label="Datum display"><svg class="i16"><use href="#datum"/></svg></button>
                <button aria-label="Annotations"><svg class="i16"><use href="#annot"/></svg></button>
                <button aria-label="Spin center"><svg class="i16"><use href="#spin"/></svg></button>
                <button aria-label="Simulate" disabled><svg class="i16"><use href="#sim"/></svg></button>
                <button aria-label="Pause" disabled><svg class="i16"><use href="#pause"/></svg></button>
                <button aria-label="Resume" disabled><svg class="i16"><use href="#flag"/></svg></button>
            </div>

            <svg class="model" viewBox="477 161 1443 832" role="img" aria-label="Utility knife assembly">
                <defs>
                    <radialGradient id="hl1" gradientUnits="userSpaceOnUse" cx="1350" cy="500" r="160"><stop offset="0" stop-color="#6b7e84"/><stop offset="1" stop-color="#6b7e84" stop-opacity="0"/></radialGradient>
                    <radialGradient id="hl2" gradientUnits="userSpaceOnUse" cx="1480" cy="500" r="130"><stop offset="0" stop-color="#62757b"/><stop offset="1" stop-color="#62757b" stop-opacity="0"/></radialGradient>
                    <linearGradient id="cv" gradientUnits="userSpaceOnUse" x1="1000" y1="0" x2="1707" y2="0"><stop offset="0" stop-color="#3fe0a8"/><stop offset=".12" stop-color="#4be83f"/><stop offset=".34" stop-color="#35e040"/><stop offset=".42" stop-color="#49efc5"/><stop offset=".56" stop-color="#3fe63f"/><stop offset=".8" stop-color="#3fe63f"/><stop offset=".87" stop-color="#4ff0d0"/><stop offset="1" stop-color="#55d5c0"/></linearGradient>
                    <marker id="ay" viewBox="0 0 10 6" refX="10" refY="3" markerWidth="13" markerHeight="7" markerUnits="userSpaceOnUse" orient="auto-start-reverse"><path d="M0 .5L10 3 0 5.500z" fill="#dfdca0"/></marker>
                    <marker id="ao" viewBox="0 0 10 6" refX="10" refY="3" markerWidth="13" markerHeight="7" markerUnits="userSpaceOnUse" orient="auto-start-reverse"><path d="M0 .5L10 3 0 5.500z" fill="#ff6a2a"/></marker>
                </defs>

                <!-- blade -->
                <path class="edge" fill="#837f78" d="M556 719L646 567 790 671 768 672 764 668 752 676 737 679 732 675 720 683 706 686 700 682 689 690 674 693 668 690 657 698 643 700 637 697 626 704 611 707 604 705 593 711 579 714Q572 708 562 718z"/>
                <path class="edge" fill="none" d="M567 699L767 656M562 718Q564 704 568 703T579 714M593 711Q597 696 600 696 603 704 610 707M626 704Q629 689 632 689 636 698 643 700M657 698Q660 683 664 683 667 691 674 693M689 690Q692 675 695 675 699 684 706 686M720 683Q723 669 727 669 730 677 737 679M752 676Q755 662 758 662 761 669 768 672"/>

                <!-- blade holder -->
                <path fill="#a0adbe" stroke="#111519" stroke-width="2" d="M646 567L798 675Q803 678 809 676 850 666 900 664 950 662 999 668L1046 650 1056 640 1040 460 1018 450 929 467 900 480z"/>
                <path fill="none" stroke="#111519" stroke-width="1.500" d="M650 565L803 673M886 515L1015 605M889 515L1016 602"/>
                <path fill="none" stroke="#111519" stroke-width="1.500" d="M809 678Q850 668 900 665.500 950 664 999 670"/>
                <ellipse cx="830" cy="579" rx="57" ry="24" transform="rotate(-11 830 579)" fill="#837f78" stroke="#30343a" stroke-width="2"/>
                <circle cx="1022" cy="643" r="10" fill="#a0adbe" stroke="#111519" stroke-width="1.500"/>

                <!-- slider -->
                <path class="edge" fill="#4b5e66" d="M672 525L929 467 937 502 647 567 646 562 668 528z"/>
                <path class="edge" fill="none" d="M649 569L885 516"/>
                <circle cx="682" cy="541" r="10.500" fill="#a9b6c8" stroke="#0d1114" stroke-width="1.500"/>
                <circle cx="909" cy="491" r="10.500" fill="#a9b6c8" stroke="#0d1114" stroke-width="1.500"/>
                <path class="edge" fill="#a9b6c8" d="M781 514L805 508 808 511 808 521 782 529z"/>
                <path fill="#8f9aa8" stroke="#0d1114" stroke-width="2" d="M745 521L781 513 782 529 748 535zM754 519l1 14M763 517l1 14M773 515l1 14"/>

                <!-- end piece -->
                <path fill="#a0adbe" fill-rule="evenodd" stroke="#14181c" stroke-width="1.500" d="M1640 485Q1670 503 1696 537L1726 567Q1748 600 1741 628 1738 643 1709 663 1680 680 1626 701L1600 680 1660 640zM1685 565Q1687 557 1692 557 1697 557 1702 565L1717 587Q1730 608 1722 623 1716 634 1681 652 1671 656 1672 643 1684 612 1685 565z"/>
                <path class="edge" fill="none" stroke-width="2" d="M1738 642Q1710 665 1665 687L1630 700"/>
                <path fill="none" stroke="#5d6670" stroke-width="6" d="M1682 563Q1688 550 1697 557M1682 566Q1682 610 1670 640 1666 658 1684 654"/>
                <path class="edge" fill="none" d="M1678 565Q1684 546 1694 550 1699 551 1706 560L1722 584Q1736 608 1728 624 1720 640 1684 662 1670 664 1668 654M1683 565h6M1700 560l4-6M1683 659l-2-8"/>

                <!-- handle -->
                <path fill="#4b5f66" stroke="#0f1518" stroke-width="1.500" d="M1026 447Q1008 451 1003 464 992 520 1004 573 1012 610 1031 633 1045 650 1070 642 1110 623 1141 625 1173 626 1227 642 1275 656 1316 656 1350 655 1427 641 1466 635 1501 642 1550 654 1592 680L1607 687Q1640 690 1655 657 1675 615 1677 570 1677 520 1644 490 1610 470 1509 444 1500 441 1488 447 1440 465 1408 435 1400 427 1390 426 1297 418 1210 424 1150 429 1080 438z"/>
                <path fill="url(#hl1)" d="M1210 433Q1300 429 1388 432L1427 453 1465 459 1430 620 1340 640 1240 630 1180 560z"/>
                <path fill="url(#hl2)" d="M1466 458L1505 449 1611 482 1605 600 1427 630z"/>
                <path fill="none" stroke="#303e44" stroke-width="8" opacity=".6" d="M1036 632Q1052 642 1074 634 1108 618 1141 620 1173 622 1227 636 1275 650 1316 651 1350 650 1427 636 1466 630 1501 637 1550 648 1592 675L1610 682Q1638 684 1651 655 1671 613 1673 570 1673 520 1641 493"/>
                <path fill="none" stroke="#82919b" stroke-width="4" opacity=".8" d="M1018 453Q1006 462 1005 480 1000 520 1005 550"/>
                <path class="edge" fill="none" d="M1024 455Q1009 462 1008 490 1006 540 1015 577L1030 618Q1040 635 1060 634 1080 630 1102 620 1120 613 1141 614 1165 615 1188 620 1215 626 1240 633 1280 645 1318 645 1360 642 1427 632 1470 624 1514 633 1560 648 1598 675 1622 682 1644 667 1670 620 1670 575 1670 520 1639 493 1622 484 1505 449 1497 447 1483 455 1440 465 1401 437 1395 432 1388 432 1320 428 1210 433 1140 439 1024 455z"/>
                <path class="edge" fill="none" d="M1210 424v10Q1130 500 1102 563 1090 600 1089 635M1351 422v9Q1280 505 1253 560 1238 600 1238 642M1466 452l-1 8Q1440 540 1433 575L1426 640M1614 477l-2 6-7 102-5 88M1102 549Q1180 551 1253 559L1433 575 1605 584 1676 588M1006 546h27M1391 426l-2 7M1509 445l-2 6M1624 479l-3 7M1593 681l6-8M1026 448v7M1030 618l-6 5M1076 641l8-60"/>
                <path fill="#a8b5c6" class="edge" d="M1398 428Q1450 430 1500 443 1440 466 1398 428z"/>

                <!-- pins -->
                <g stroke="#11181b" stroke-width="1.500">
                    <circle cx="1276" cy="447" r="12.500" fill="#6c7a84"/><circle cx="1276" cy="447" r="8" fill="#a9b6c8"/>
                    <circle cx="1569" cy="485" r="12.500" fill="#6c7a84"/><circle cx="1569" cy="485" r="8" fill="#a9b6c8"/>
                    <circle cx="1642" cy="594" r="12.500" fill="#6c7a84"/><circle cx="1642" cy="594" r="8" fill="#a9b6c8"/>
                    <circle cx="1064" cy="563" r="36" fill="#43565c"/><circle cx="1064" cy="563" r="33" fill="#4a5d63"/>
                    <circle cx="1064" cy="563" r="20.500" fill="#98939f"/><circle cx="1064" cy="563" r="13" fill="#85879a"/><circle cx="1064" cy="563" r="10.500" fill="#8b8da1"/>
                </g>

                <!-- skeleton curves -->
                <g fill="none" stroke="#25b1e8" stroke-width="1.500">
                    <path d="M929 467L1011 451M1004 573Q1010 605 1047 651M1397 427Q1455 431 1501 442M993 670L1060 682M793 682L808 677M1685 562l10 7"/>
                    <path stroke-width="1" d="M1004 463Q990 530 1004 573"/>
                    <path stroke="#12b5f5" stroke-width="3" d="M1643 490Q1688 512 1718 532"/>
                </g>
                <path fill="none" stroke="url(#cv)" stroke-width="2" d="M1000 687Q1040 655 1080 637 1110 624 1141 625 1173 627 1227 642 1275 656 1316 656 1350 655 1427 641 1466 635 1501 642 1550 653 1592 680 1650 722 1707 782"/>

                <!-- dimensions -->
                <g fill="#1c1c1e">
                    <rect x="1037" y="361" width="26" height="17" opacity=".85"/><rect x="1115" y="380" width="44" height="17"/><rect x="874" y="607" width="26" height="17" opacity=".75"/><rect x="1712" y="679" width="30" height="17"/><rect x="1645" y="642" width="45" height="17" opacity=".85"/>
                </g>
                <g fill="none" stroke="#dfdca0" stroke-width="1.500">
                    <path d="M1013 350L999 685M1073 362L1068 487M1273 491L1000 687M881 557L998 562M876 680L994 686M1721 593h18M1712 782l18 1"/>
                    <path marker-start="url(#ay)" marker-end="url(#ay)" d="M1013 358Q1190 365 1266 495"/>
                    <path marker-start="url(#ay)" d="M1013 368h24"/>
                    <path marker-end="url(#ay)" d="M1060 370h12"/>
                    <path marker-start="url(#ay)" d="M889 557L887 607"/>
                    <path marker-end="url(#ay)" d="M886 624L885 681"/>
                    <path marker-start="url(#ay)" d="M1730 593L1727 679"/>
                    <path marker-end="url(#ay)" d="M1726 696L1722 782"/>
                </g>
                <g fill="none" stroke="#f57a45" stroke-width="1.500">
                    <path d="M1713 640L1707 777M1605 680L1707 782"/>
                    <path marker-start="url(#ao)" marker-end="url(#ao)" d="M1610 687Q1640 645 1711 645"/>
                </g>
                <g class="dims">
                    <text x="1041" y="374">.35</text>
                    <text x="1118" y="393">52.00&deg;</text>
                    <text x="878" y="620">.72</text>
                    <text x="1715" y="692">1.10</text>
                    <text class="hot" x="1648" y="656">48.00&deg;</text>
                </g>
            </svg>
            <p class="rep-note">On-Demand Simp Rep:DEFAULT REP</p>
        </section>
    </main>

    <footer class="status">
        <button class="pressed" aria-label="Navigator"><svg class="i16"><use href="#panel"/></svg></button>
        <button aria-label="Browser"><svg class="i16" viewBox="0 0 16 16"><circle cx="8" cy="8" r="6" fill="#2f8fc4"/><path d="M4 5q4-3 6 0-1 4-5 3zM8 10l4 0-2 4z" fill="#bfe6f7"/><path d="M1 14Q0 10 8 5t7-3q1 4-7 9t-7 3z" fill="none" stroke="#8a86b0"/></svg></button>
        <button aria-label="Full screen"><svg class="i16" viewBox="0 0 16 16"><path d="M.5.5h15v15H.5z" fill="url(#gFade)" stroke="#2c6f92"/></svg></button>
        <span class="sep"></span>
        <div class="selection">
            <span class="sep double"></span>
            <button aria-label="Find"><svg class="i16" viewBox="0 0 16 16"><path d="M2 6l1-4h3l1 4h2l1-4h3l1 4 1 9H9.500V9h-3v6H1z" fill="#4b4f50"/><path d="M3 8v5M12 8v5" stroke="#bbb"/></svg><i class="caret"></i></button>
            <span class="sep"></span>
            <button aria-label="Box selection" disabled><svg class="i16" viewBox="0 0 16 16"><path d="M.5 2.500h14v11H.5z" fill="none" stroke="#888" stroke-dasharray="3 2"/></svg><i class="caret"></i></button>
            <button aria-label="Pick" disabled><svg class="i16" viewBox="0 0 16 16"><path d="M.5.5h15v15H.5z" fill="#e4e7e7" stroke="#999" stroke-dasharray="3 2"/><circle cx="6" cy="5" r="3" fill="none" stroke="#999"/><path d="M8 5v9l2-2h4z" fill="#eee" stroke="#999"/></svg></button>
            <button class="geo" aria-label="Selection geometry"><svg class="i18" viewBox="0 0 18 18"><path d="M1 5l4-4h12v12l-4 4H1zM1 5h12v12M13 5l4-4" fill="#fff" stroke="#333"/><path d="M4 8l1-1h6v6l-1 1H4z" fill="#fbe3a0" stroke="#a77b20"/><path d="M6 8h4v4H6z" fill="#58c7ec" stroke="#1f6f95"/></svg></button>
            <span class="count">1 selected</span>
            <select aria-label="Selection filter"><option>Section Subitems</option></select>
        </div>
    </footer>

    <div class="taskbar">
        <button class="weather">
            <svg width="28" height="30" viewBox="0 0 28 30"><path d="M9.500 16v9q0 3-3 2" fill="none" stroke="#777" stroke-width="2"/><path d="M0 18Q1 9 9 8t11 10q-3-2-5 0-2-2-5 0-3-2-5 0-2-2-5 0z" fill="#4d9fe8"/><circle cx="18" cy="8" r="8" fill="#ff99a4"/><text x="16" y="12" font-size="11" fill="#222">1</text></svg>
            <span>1 inch of rain<br><em>Thursday</em></span>
        </button>
        <div class="apps">
            <button aria-label="Start"><svg viewBox="0 0 24 24"><path d="M0 0h11.400v11.400H0zM12.600 0H24v11.400H12.600zM0 12.600h11.400V24H0zM12.600 12.600H24V24H12.600z" fill="url(#gWin)"/></svg></button>
            <label class="search"><svg viewBox="0 0 24 24"><circle cx="10" cy="10" r="6" fill="none" stroke="#eee" stroke-width="2"/><path d="M14 15l5 5" stroke="#eee" stroke-width="2"/></svg><input type="text" placeholder="Search" aria-label="Search"></label>
            <button aria-label="Task view"><svg viewBox="0 0 24 24"><path d="M6 1h18v15H6z" fill="#eee"/><path d="M0 7h18v15H0z" fill="#777" opacity=".75"/></svg></button>
            <button aria-label="Copilot"><svg viewBox="0 0 24 24"><path d="M7 1h8q2 0 3 4l-6 1-3 11H5q-5 0-4-5L4 4q1-3 3-3z" fill="#2f7fe0"/><path d="M3 7l9-1-3 11H5q-5 0-4-5z" fill="#5fc98a"/><path d="M17 23H9q-2 0-3-4l6-1 3-11h4q5 0 4 5l-3 8q-1 3-3 3z" fill="#ef6fa8"/><path d="M14 11l1-4h4q5 0 4 5z" fill="#b86fe0"/><path d="M6 19l6-1 1-3 3 8H9q-2 0-3-4z" fill="#ff9a4f"/></svg></button>
            <button class="run" aria-label="File Explorer"><svg viewBox="0 0 24 24"><path d="M0 2h8l2 3h10v5H0z" fill="#d9a31e"/><path d="M0 5h24v17H0z" fill="#ffd24d"/><path d="M4 22v-5q0-2 2-2h12q2 0 2 2v5z" fill="#1577c9"/></svg></button>
            <button aria-label="Edge"><svg viewBox="0 0 24 24"><circle cx="12" cy="12" r="12" fill="#1b80d0"/><path d="M1 9Q3 0 12 0q12 1 12 11 0 6-7 6-4-1-2-4 1-6-6-6-5 0-8 2z" fill="#45cfa0"/><path d="M7 13q0 9 9 10Q5 25 3 16q0-8 8-8-4 2-4 5z" fill="#0d4c94"/></svg></button>
            <button aria-label="Sheets"><svg viewBox="0 0 24 24"><rect width="24" height="24" rx="4" fill="#0ba84f"/><path d="M7 5h5v14H7zM13 5h4v14h-4z" fill="#fff"/><path d="M6 12l6-2 6 2" stroke="#0ba84f" fill="none"/></svg></button>
            <button aria-label="Creo View"><svg viewBox="0 0 24 24"><path d="M4 1h19v17l-5 5H2V5z" fill="#1c66e8" stroke="#fff" stroke-width="1.500"/><path d="M16 8q-7-2-7 4t7 4" fill="none" stroke="#fff" stroke-width="2"/></svg></button>
            <button aria-label="Store"><svg viewBox="0 0 24 24"><path d="M7 6V2q0-1 1-1h8q1 0 1 1v4" fill="none" stroke="#2fb4e8" stroke-width="2"/><path d="M1 5h22v15q0 4-4 4H5q-4 0-4-4z" fill="#eee"/><path d="M7 9h4v4H7z" fill="#f25022"/><path d="M13 9h4v4h-4z" fill="#7fba00"/><path d="M7 15h4v4H7z" fill="#00a4ef"/><path d="M13 15h4v4h-4z" fill="#ffb900"/></svg></button>
            <button aria-label="OBS"><svg viewBox="0 0 24 24"><circle cx="12" cy="12" r="11" fill="#232323" stroke="#ccc" stroke-width="1.500"/><path d="M12 12Q7 10 9 4M12 12q5-3 9 1M12 12q0 6-6 6" fill="none" stroke="#ccc" stroke-width="2"/></svg></button>
            <button aria-label="Blender"><svg viewBox="0 0 24 24"><circle cx="15" cy="14" r="8" fill="#f5852a"/><path d="M1 17l11-9H4V6h8L9 3l3-1 9 7-9 5z" fill="#f5852a"/><circle cx="15" cy="14" r="5" fill="#fff"/><circle cx="15" cy="14" r="3" fill="#265787"/></svg></button>
            <button aria-label="Figma"><svg viewBox="0 0 24 24"><path d="M7 5h5v5H9q-2-1-2-3z" fill="#f24e1e"/><path d="M12 5h3q3 1 3 3t-3 2h-3z" fill="#ff7262"/><path d="M12 10H9q-2 0-2 2.500T9 15h3z" fill="#a259ff"/><circle cx="15" cy="12.500" r="2.500" fill="#1abcfe"/><path d="M12 15H9q-2 0-2 2.500T9.500 20 12 17.500z" fill="#0acf83"/></svg></button>
            <button aria-label="Filmora"><svg viewBox="0 0 24 24"><rect width="24" height="24" rx="5" fill="#1d4050"/><path d="M12 3l6 5-6 7-4-3 4-4-4-2z" fill="#5fe5c0"/><path d="M9 4l3-1 2 3-2 2z" fill="#fff"/><path d="M5 20l7-2 7 2-7 3z" fill="#c9dbe0"/></svg></button>
            <button aria-label="Outlook"><svg viewBox="0 0 24 24"><path d="M6 7l8-6 10 7v14H6z" fill="#38b6f0"/><path d="M6 22l18-12v12z" fill="#7fdcf8"/><path d="M0 7h14v14H0z" fill="#0f5fb8"/><circle cx="7" cy="14" r="3.500" fill="none" stroke="#fff" stroke-width="2"/></svg></button>
            <button class="run" aria-label="Teams"><svg viewBox="0 0 24 24"><circle cx="13" cy="5" r="4" fill="#7b83eb"/><path d="M9 9h14v8q-2 6-8 6t-7-6z" fill="#6a72dd"/><path d="M0 6h12v13H0z" fill="#464eb8"/><path d="M3 9h6M6 9v7" stroke="#fff" stroke-width="2"/></svg><span class="ok"><svg viewBox="0 0 12 12"><circle cx="6" cy="6" r="6" fill="#13a10e"/><path d="M3 6l2 2 4-4" fill="none" stroke="#fff"/></svg></span></button>
            <button class="run active" aria-label="Creo Parametric"><svg viewBox="0 0 24 24"><path d="M0 0h24v24H0z" fill="#fff"/><path d="M3 3h18v18H3z" fill="#dcdccf"/><path d="M4 4h2v16H4z" fill="#35566a"/><path d="M8 4h11v11H8z" fill="#1497d4"/><path d="M8 15h11v1H8z" fill="#35566a"/></svg></button>
            <button class="run" aria-label="Chrome"><svg viewBox="0 0 24 24"><circle cx="12" cy="12" r="12" fill="#2ea44f"/><path d="M12 12L1.600 6A12 12 0 0 1 22.400 6z" fill="#e33b2e"/><path d="M12 24A12 12 0 0 0 22.400 6H12z" fill="#fbc116"/><circle cx="12" cy="12" r="5.500" fill="#2b7de9" stroke="#fff" stroke-width="1.500"/></svg></button>
            <button aria-label="GIMP"><svg viewBox="0 0 24 24"><path d="M2 7l5 2q6-1 9-1l7-7q1 6 0 12 0 8-8 8-7 0-9-7z" fill="#7b746a"/><circle cx="9" cy="10" r="3" fill="#fff"/><circle cx="15" cy="10" r="3.500" fill="#fff"/><circle cx="9" cy="10" r="1.500"/><circle cx="15" cy="10" r="1.500"/><path d="M12 17h6l3 5" stroke="#c88b2f" stroke-width="2" fill="none"/></svg></button>
            <button aria-label="Scanner"><svg viewBox="0 0 24 24"><rect width="24" height="24" rx="3" fill="#2237a8"/><path d="M7 3h9l2 9H6z" fill="#fff"/><path d="M4 12h16v6H4z" fill="#e9ecf7"/><path d="M5 20h14" stroke="#8ea0e8"/></svg></button>
            <button class="run" aria-label="Filmora project"><svg viewBox="0 0 24 24"><rect width="24" height="24" rx="5" fill="#1d4050"/><path d="M12 3l6 5-6 7-4-3 4-4-4-2z" fill="#5fe5c0"/><path d="M9 4l3-1 2 3-2 2z" fill="#fff"/><path d="M5 20l7-2 7 2-7 3z" fill="#c9dbe0"/></svg></button>
            <button class="run" aria-label="Media Player"><svg viewBox="0 0 24 24"><circle cx="12" cy="12" r="11" fill="#2b2b2b" stroke="#c9708c" stroke-width="2"/><path d="M4 4Q12-2 20 4" fill="none" stroke="#ff9b45" stroke-width="2"/><path d="M9 6l9 6-9 6z" fill="#fff"/></svg></button>
        </div>
        <div class="clock">10:20 AM<br>6/18/2025</div>
    </div>
</body>
</html>
```
FILE: styles.css
```css
* {
    box-sizing: border-box;
}

body {
    margin: 0;
    height: 100vh;
    display: flex;
    flex-direction: column;
    overflow: hidden;
    font-family: "Noto Sans", "Open Sans", sans-serif;
    font-size: 11px;
    color: #3c4142;
    background: #f7faf9;
}

button {
    display: flex;
    align-items: center;
    padding: 0;
    border: none;
    background: none;
    color: inherit;
    font: inherit;
}

input {
    min-width: 0;
    flex: 1;
    border: none;
    outline: none;
    background: none;
    font: inherit;
}

svg {
    flex: none;
}

ul {
    list-style: none;
    margin: 0;
    padding: 0;
}

.defs {
    position: absolute;
}

.i12 { width: 12px; height: 12px; }
.i14 { width: 14px; height: 14px; }
.i16 { width: 16px; height: 16px; }
.i18 { width: 20px; height: 20px; }

.caret {
    display: inline-block;
    border: 4px solid transparent;
    border-top-color: #505556;
    border-bottom: none;
}

.caret.up {
    border-top: none;
    border-bottom: 4px solid #888d8e;
}

.caret.left {
    border: 4px solid transparent;
    border-right-color: #777;
    border-left: none;
}

.caret.right {
    border: 4px solid transparent;
    border-left-color: #777;
    border-right: none;
}

.caret.off,
button:disabled .caret {
    border-top-color: #aeb3b3;
}

.caret.white {
    border-top-color: #fff;
}

.sep {
    width: 1px;
    height: 24px;
    background: #a9aeae;
}

/* title bar */
.titlebar {
    display: grid;
    grid-template-columns: 1fr auto 1fr;
    align-items: center;
    height: 28px;
    padding: 0 10px 0 8px;
    background: #d9dfdc;
}

.brand {
    width: 52px;
    margin-left: -4px;
    font-family: "Inter", sans-serif;
    font-size: 16px;
    line-height: 16px;
    color: #565c5d;
}

.quick {
    display: flex;
    align-items: center;
    gap: 8px;
}

.quick button {
    gap: 6px;
}

.more {
    height: 24px;
    padding-left: 8px;
    border-left: 1px solid #a4aaa9 !important;
}

.caret.bar {
    height: 7px;
    border-bottom: none;
    border-top-width: 5px;
    box-shadow: 0 -2px 0 -1px #505556;
}

.titlebar h1 {
    margin: 0;
    font-size: 12px;
    font-weight: normal;
}

.winbtns {
    display: flex;
    justify-content: flex-end;
    gap: 15px;
}

/* ribbon tabs */
.tabs {
    display: flex;
    height: 27px;
    background: #3e4747;
    color: #fff;
}

.tab {
    padding: 1px 24px 0;
    font-size: 12px;
}

.tab.file {
    padding: 1px 20px 0;
    background: linear-gradient(#5fc83f, #49ad30);
}

.tab.selected {
    background: #f7faf9;
    color: #3f8a2a;
}

.tab-tools {
    display: flex;
    align-items: center;
    gap: 11px;
    margin-left: auto;
    padding-right: 9px;
}

.tab-tools .fold .caret {
    border-width: 0 5px 6px;
    border-bottom-color: #fff;
}

.fold {
    margin-bottom: 6px;
}

.cmd-search {
    display: flex;
    width: 232px;
    height: 23px;
    margin-left: -4px;
    padding-right: 2px;
    background: #fff;
}

.find {
    height: 25px;
    padding: 0 4px;
    margin: 0 -6px 0 -9px;
    background: #dfe3e2;
}

.help {
    font-size: 13px;
    font-weight: bold;
}

/* ribbon */
.ribbon {
    display: flex;
    height: 107px;
    border-bottom: 1px solid #a9b5b4;
}

.group {
    display: flex;
    flex-direction: column;
    align-items: center;
    padding: 0 7px;
    margin-bottom: 2px;
    border-right: 1px solid #b5baba;
}

.operations { width: 149px; }
.get-data { width: 146px; }
.component { width: 278px; }
.datum { width: 218px; }
.cut { width: 96px; }
.modifiers { width: 72px; }
.display { width: 399px; }
.intent { width: 310px; }
.investigate { width: 123px; }

.cmds {
    flex: 1;
    display: flex;
    justify-content: space-between;
    align-self: stretch;
}

.cut .cmds,
.modifiers .cmds {
    justify-content: center;
}

.big {
    flex-direction: column;
    line-height: 15px;
    text-align: center;
    white-space: nowrap;
}

.big svg {
    width: 32px;
    height: 32px;
    margin: 5px 0 10px;
}

.big .caret {
    margin-top: 5px;
}

.big span .caret,
.group-name .caret {
    margin: 0 0 3px 4px;
}

.big.divided {
    height: 80px;
    padding-left: 7px;
    border-left: 1px solid #b5baba;
}

.stack button {
    height: 27px;
    gap: 4px;
    white-space: nowrap;
}

.stack .caret {
    margin-left: 3px;
}

.stack button:disabled {
    color: #a8adad;
}

.group-name {
    height: 20px;
    white-space: nowrap;
}

/* model tree */
main {
    flex: 1;
    display: flex;
    min-height: 0;
}

.navigator {
    display: flex;
    flex-direction: column;
    width: 477px;
    border-right: 3px solid #d5dad8;
    background: #f6faf9;
}

.nav-tabs {
    display: flex;
    height: 26px;
    background: #d9dfdc;
}

.nav-tabs button {
    width: 32px;
    padding-left: 7px;
}

.nav-tabs .selected {
    padding-left: 11px;
    background: #f6faf9;
}

.tree-tools {
    display: flex;
    align-items: center;
    height: 32px;
    padding: 0 6px;
}

.tree-tools button {
    width: 24px;
    height: 24px;
    justify-content: center;
}

.tree-tools .dots {
    height: 16px;
    margin: 0 17px 0 0;
    border-left: 2px dotted #aaa;
}

.tree-tools .pressed {
    margin-left: 1px;
}

.pressed {
    border: 1px solid #9da2a2 !important;
    background: #dde1e0 !important;
}

.tree-tools .sep {
    margin: 0 4px;
}

.tree-tools .last {
    margin-left: auto;
}

.filter {
    display: flex;
    align-items: center;
    padding: 0 11px 0 12px;
    gap: 6px;
}

.filter > svg {
    margin-right: -2px;
}

.filter-box {
    flex: 1;
    display: flex;
    height: 27px;
    padding: 0 4px;
    border: 1px solid #aeb4b4;
    background: #fff;
}

.filter > button + button {
    margin-left: 6px;
}

.tree-head {
    display: grid;
    grid-template-columns: 297px 1fr;
    height: 21px;
    margin: 4px 5px 0 8px;
    border-bottom: 1px solid #c9cfce;
    background: #fbfafb;
    color: #222;
}

.rep-head {
    display: flex;
    align-items: center;
    gap: 2px;
    padding-left: 6px;
    border-left: 1px solid #c9cfce;
}

.rep {
    width: 12px;
    height: 14px;
}

.tree-body {
    position: relative;
    flex: 1;
    display: flex;
    min-height: 0;
    margin: 0 5px 0 8px;
    overflow: hidden;
}

.names {
    width: 298px;
    border-right: 1px solid #e0e5e4;
}

.reps {
    flex: 1;
}

.reps .row {
    gap: 1px;
    padding-left: 1px;
}

.row {
    display: flex;
    align-items: center;
    height: 18px;
    gap: 6px;
    white-space: nowrap;
}

.row.root {
    padding-left: 4px;
}

.branch {
    margin-left: 11px;
}

.branch > li {
    background: linear-gradient(#c0c5c4, #c0c5c4) 0 0 / 1px 100% no-repeat;
}

.branch .row::before {
    content: "";
    width: 8px;
    height: 1px;
    margin-right: -2px;
    background: #c0c5c4;
}

.branch .row.node::before {
    width: 0;
    height: 0;
    margin: 0 4px 0 -2px;
    background: none;
    border: 4px solid transparent;
    border-left: 5px solid #505556;
    border-right: none;
}

.branch .row.open::before {
    margin: 0 2px 0 -4px;
    border: 4px solid transparent;
    border-top-color: #505556;
    border-bottom: none;
}

.branch.inner {
    margin-left: 20px;
}

.branch.inner > li:last-child {
    background-size: 1px 9px;
}

.picked {
    margin: 0 -1px;
    line-height: 15px;
    outline: 1px dotted #222;
    background: #a9e0fa;
}

.insert-here {
    height: 14px;
}

.below {
    height: 4px;
}

.insert-here::after {
    content: "";
    position: absolute;
    left: 23px;
    right: 14px;
    height: 2px;
    margin-top: 7px;
    background: #8fabb5;
}

.vscroll {
    display: flex;
    flex-direction: column;
    width: 15px;
    border: 1px solid #c9cfce;
    background: #dddfdf;
}

.vscroll b,
.hscroll b {
    display: flex;
    align-items: center;
    justify-content: center;
    flex: 0 0 14px;
    background: #f9f9fa;
}

.vscroll .thumb {
    height: 486px;
    margin-bottom: auto;
    border: solid #b5baba;
    border-width: 1px 0;
    background: #f9f9fa;
}

.hscrolls {
    display: grid;
    grid-template-columns: 298px 1fr;
    margin: 0 20px 6px 8px;
}

.hscroll {
    display: flex;
    height: 15px;
    border: 1px solid #c9cfce;
}

.hscroll .track {
    flex: 1;
}

.hscroll.live .track {
    border: solid #b5baba;
    border-width: 0 1px;
    box-shadow: 12px 0 #dddfdf;
    margin-right: 12px;
    background: #f9f9fa;
}

.caret.left.off,
.caret.right.off {
    border-top-color: transparent;
    opacity: .6;
}

/* graphics area */
.graphics {
    position: relative;
    flex: 1;
    min-width: 0;
    background: #4a4852;
}

.model {
    display: block;
    width: 100%;
    height: 100%;
}

.edge {
    stroke: #12171a;
    stroke-width: 1;
}

.dims text {
    font-family: "Liberation Sans", sans-serif;
    font-size: 12px;
    fill: #eeeccc;
}

.dims .hot {
    fill: #ff6a35;
}

.view-tools {
    position: absolute;
    top: 7px;
    left: 50%;
    transform: translateX(-50%);
    display: flex;
    height: 31px;
    padding: 0 2px;
    border: 1px solid #ccd2d1;
    background: #f9fbfb;
}

.view-tools button {
    width: 26px;
    justify-content: center;
}

.view-tools .menu {
    background: linear-gradient(135deg, transparent 50%, #555 50%) 21px 22px / 4px 4px no-repeat;
}

.rep-note {
    position: absolute;
    left: 8px;
    bottom: 72px;
    margin: 0;
    font-family: "Liberation Sans", sans-serif;
    font-size: 11px;
    color: #2fe34c;
}

/* status bar */
.status {
    display: flex;
    align-items: center;
    gap: 4px;
    height: 39px;
    padding: 1px 18px 0 6px;
    border-top: 1px solid #a9b5b4;
}

.status > button {
    width: 22px;
    height: 24px;
    justify-content: center;
}

.status > .sep {
    margin-left: 7px;
}

.selection {
    display: flex;
    align-items: center;
    gap: 7px;
    margin-left: auto;
}

.selection button {
    gap: 7px;
}

.selection .sep {
    height: 30px;
}

.sep.double {
    width: 5px;
    border: solid #a9aeae;
    border-width: 0 1px;
    background: none;
}

.selection .geo {
    width: 40px;
    height: 27px;
    margin-right: -2px;
    justify-content: center;
    border: 1px solid #a9aeae;
}

.count {
    width: 79px;
}

.status select {
    width: 165px;
    height: 23px;
    padding: 0 7px;
    border: 1px solid #a5abab;
    border-radius: 0;
    appearance: none;
    background:
        linear-gradient(to top right, transparent 50%, #505556 50%) right 7px top 8px / 4px 5px no-repeat,
        linear-gradient(to top left, transparent 50%, #505556 50%) right 3px top 8px / 4px 5px no-repeat,
        linear-gradient(#a5abab, #a5abab) right 14px top 0 / 1px 100% no-repeat,
        #f6f9f8;
    color: inherit;
    font: inherit;
}

/* taskbar */
.taskbar {
    display: grid;
    grid-template-columns: 1fr auto 1fr;
    align-items: center;
    height: 48px;
    padding: 0 18px 0 20px;
    background: #1c1c1c;
    color: #fff;
}

.weather {
    gap: 3px;
    text-align: left;
    line-height: 16px;
}

.weather em {
    font-style: normal;
    color: #bbb;
}

.apps {
    display: flex;
    align-items: center;
}

.apps button {
    position: relative;
    flex-direction: column;
    justify-content: center;
    width: 44px;
    height: 48px;
}

.apps svg {
    width: 24px;
    height: 24px;
}

/* mark under an app with an open window */
.apps .run::after {
    content: "";
    position: absolute;
    bottom: 5px;
    width: 6px;
    height: 3px;
    border-radius: 2px;
    background: #999;
}

.apps .active {
    width: 38px;
    height: 39px;
    margin: 0 3px;
    border-radius: 4px;
    background: #333;
}

.apps .active::after {
    bottom: 0;
    width: 16px;
    background: #b9a7d9;
}

.ok {
    position: absolute;
    top: 7px;
    right: 3px;
}

.ok svg {
    display: block;
    width: 15px;
    height: 15px;
}

.search {
    display: flex;
    align-items: center;
    gap: 7px;
    width: 220px;
    height: 32px;
    margin: 0 2px;
    padding: 0 10px;
    border: 1px solid #4a4a4a;
    border-radius: 16px;
    background: #383838;
}

.search svg {
    width: 20px;
    height: 20px;
}

.search input {
    font-size: 13px;
    color: #fff;
}

.search input::placeholder {
    color: #c8c8c8;
}

.clock {
    text-align: right;
    line-height: 16px;
}
```
